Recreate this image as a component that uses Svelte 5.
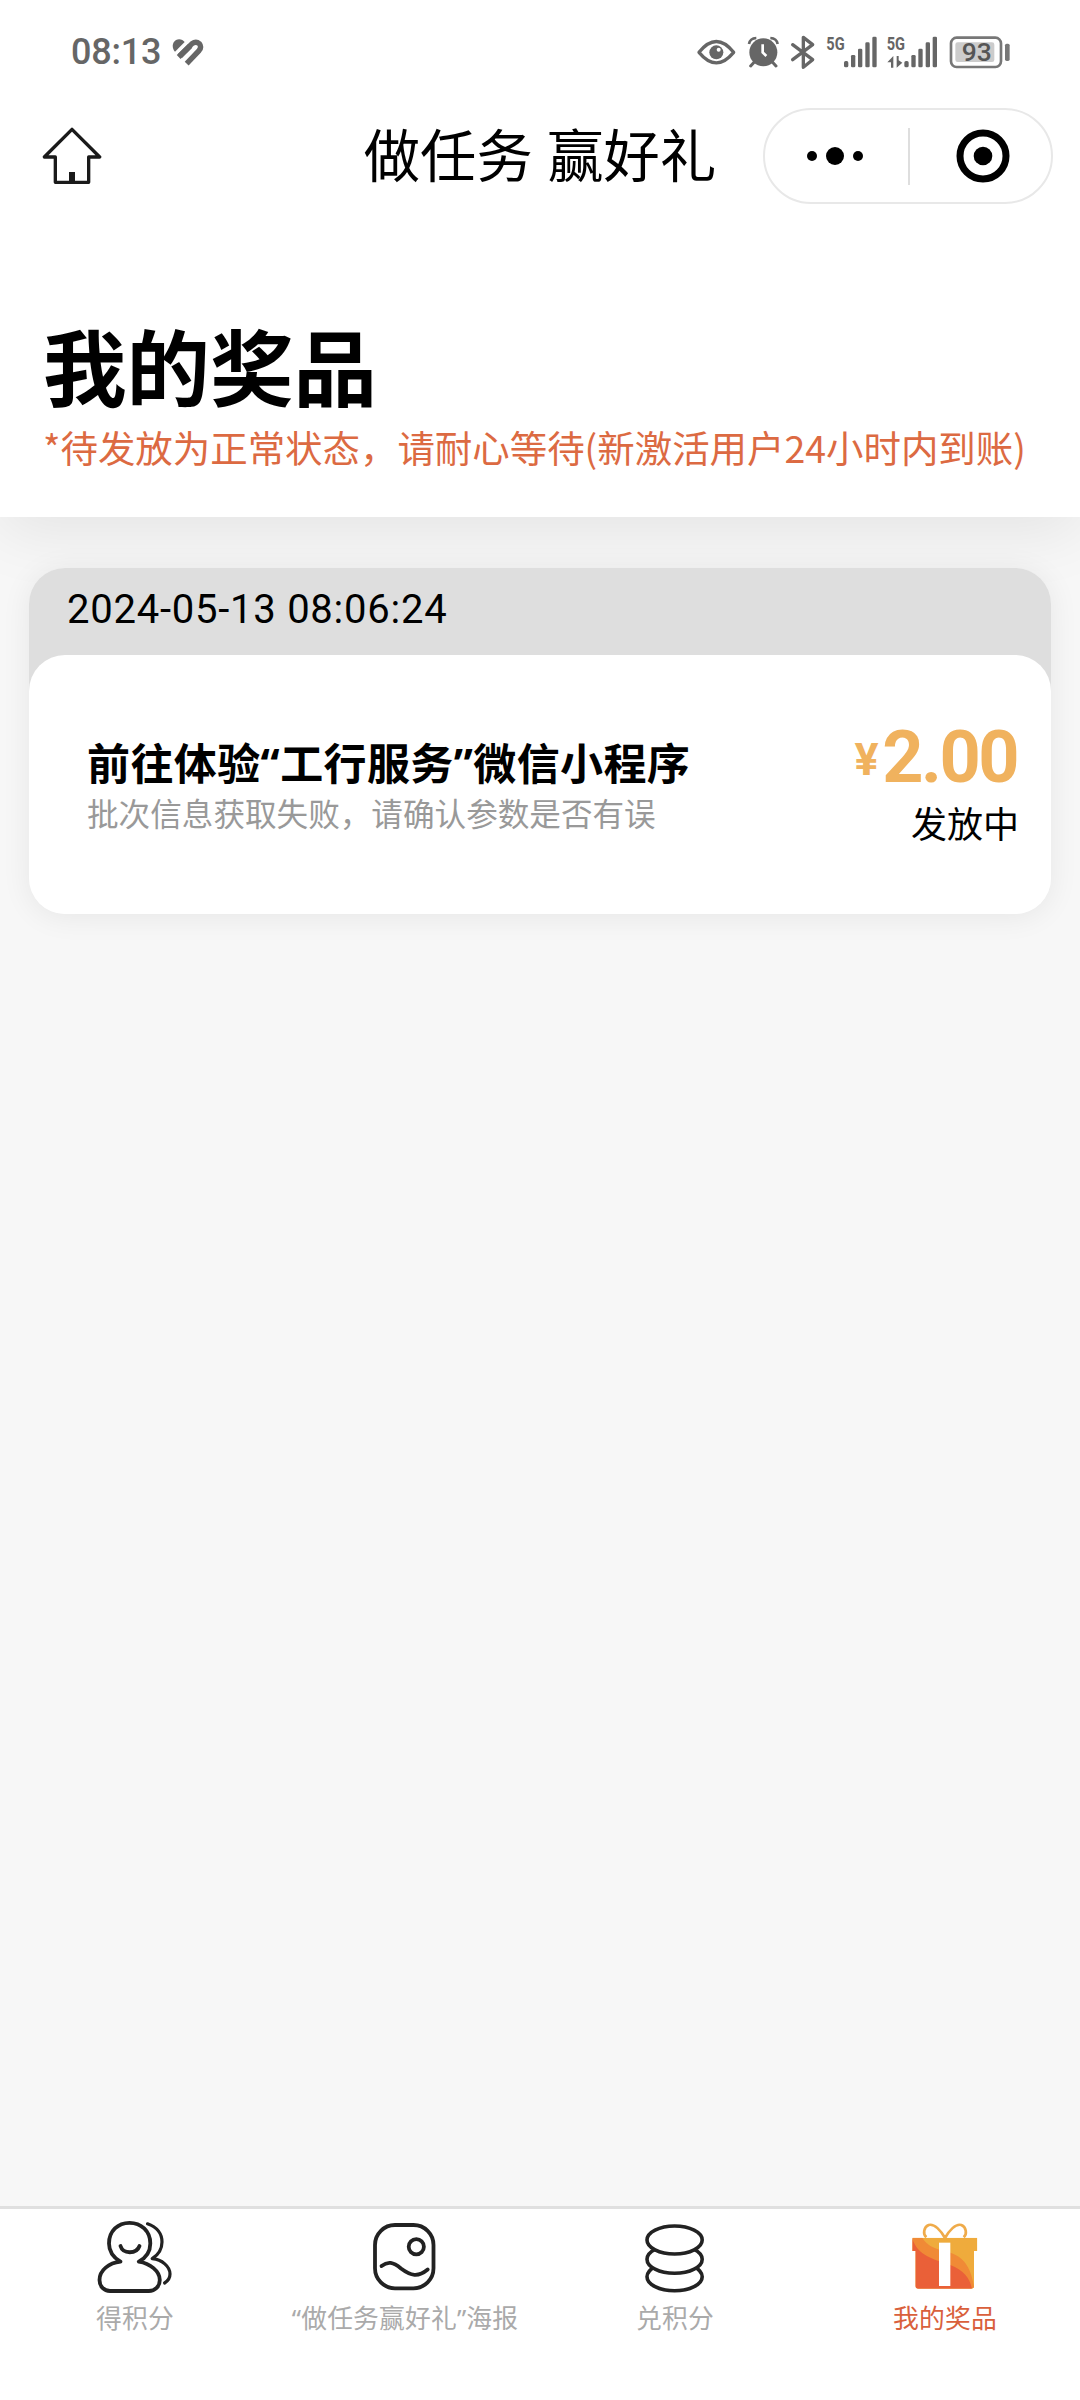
<script>
  const prizes = [
    {
      time: '2024-05-13 08:06:24',
      title: '前往体验“工行服务”微信小程序',
      note: '批次信息获取失败，请确认参数是否有误',
      amount: '2.00',
      status: '发放中'
    }
  ];
  const tabs = [
    { id: 'earn', label: '得积分' },
    { id: 'poster', label: '“做任务赢好礼”海报' },
    { id: 'redeem', label: '兑积分' },
    { id: 'prizes', label: '我的奖品' }
  ];
  let active = $state('prizes');
</script>

<div class="screen">
  <div class="statusbar">
    <span class="clock">08:13</span>
    <svg class="health" width="32" height="28" viewBox="516 113 96 84">
      <g fill="none" stroke="#666" stroke-linecap="butt">
        <path d="M536 170 L576 130 Q588 121 598 130 Q606 140 597 151 L560 190" stroke-width="16" />
        <path d="M540 167 L571 136" stroke-width="17" />
      </g>
      <path d="M525 154 C515 143 516 126 528 119 C538 114 549 118 554 125 Z" fill="#666" />
    </svg>
    <div class="indicators">
      <svg width="48.33" height="45" viewBox="40 30 145 135">
        <path d="M58 97 Q110 32 162 97 Q110 160 58 97Z" fill="none" stroke="#666" stroke-width="10" stroke-linejoin="round" />
        <circle cx="110" cy="97" r="21" fill="#666" />
        <circle cx="117" cy="89" r="6" fill="#fff" />
      </svg>
      <svg width="43.33" height="45" viewBox="185 30 130 135">
        <circle cx="249" cy="97" r="42" fill="#666" />
        <path d="M206 72 Q209 55 228 54 M292 72 Q289 55 270 54" fill="none" stroke="#666" stroke-width="8" />
        <path d="M222 126 L211 138 M276 126 L287 138" stroke="#666" stroke-width="9" stroke-linecap="round" />
        <path d="M247 73 V97 L258 108" fill="none" stroke="#fff" stroke-width="8" />
      </svg>
      <svg width="36.67" height="45" viewBox="315 30 110 135">
        <path d="M338 74 L398 119 L370 142 V52 L398 74 L338 119" fill="none" stroke="#666" stroke-width="10" stroke-linejoin="round" stroke-linecap="round" />
      </svg>
      <svg width="60.67" height="45" viewBox="425 30 182 135">
        <text class="net" x="438" y="90" textLength="55" lengthAdjust="spacingAndGlyphs">5G</text>
        <g fill="#666">
          <rect x="491" y="123" width="13" height="19" rx="5" />
          <rect x="512" y="105" width="13" height="37" rx="4" />
          <rect x="533" y="86" width="13" height="56" rx="4" />
          <rect x="555" y="67" width="13" height="75" rx="4" />
          <rect x="576" y="50" width="13" height="92" rx="4" />
        </g>
      </svg>
      <svg width="61" height="45" viewBox="607 30 183 135">
        <text class="net" x="621" y="90" textLength="55" lengthAdjust="spacingAndGlyphs">5G</text>
        <g fill="#666">
          <path d="M641 108 V143 H634 V127 H623Z" />
          <path d="M651 108 H657 V121 L668 128 L651 143Z" />
          <rect x="674" y="123" width="13" height="19" rx="5" />
          <rect x="695" y="105" width="13" height="37" rx="4" />
          <rect x="716" y="86" width="13" height="56" rx="4" />
          <rect x="738" y="67" width="13" height="75" rx="4" />
          <rect x="759" y="50" width="13" height="92" rx="4" />
        </g>
      </svg>
      <svg width="73.33" height="45" viewBox="790 30 220 135">
        <rect x="814" y="53" width="150" height="88" rx="17" fill="none" stroke="#777" stroke-width="8" />
        <rect x="827" y="67" width="117" height="59" rx="7" fill="#ccc" />
        <rect x="976" y="71" width="14" height="52" rx="5" fill="#777" />
        <text class="charge" x="846" y="123" textLength="90" lengthAdjust="spacingAndGlyphs">93</text>
      </svg>
    </div>
  </div>

  <header class="navbar">
    <div class="nav-side">
      <svg class="home" width="60" height="60" viewBox="126 378 180 180">
        <path d="M216 388 L299 471 H266 V547 H166 V471 H133 Z" fill="none" stroke="#1a1a1a" stroke-width="10" stroke-linejoin="round" />
        <rect x="207" y="516" width="18" height="32" fill="#1a1a1a" />
      </svg>
    </div>
    <h1>做任务 赢好礼</h1>
    <div class="nav-side end">
      <div class="capsule">
        <svg width="60" height="60" viewBox="-30 -30 60 60">
          <circle cx="-23" r="5" /><circle r="9" /><circle cx="23" r="5" />
        </svg>
        <span class="divider"></span>
        <svg width="60" height="60" viewBox="-30 -30 60 60">
          <circle r="23" fill="none" stroke="#000" stroke-width="7" /><circle r="9.3" />
        </svg>
      </div>
    </div>
  </header>

  <section class="intro">
    <h2>我的奖品</h2>
    <p>*待发放为正常状态，请耐心等待(新激活用户24小时内到账)</p>
  </section>

  <main>
    {#each prizes as prize}
      <article class="card">
        <div class="card-time">{prize.time}</div>
        <div class="card-body">
          <div class="info">
            <h3>{prize.title}</h3>
            <p>{prize.note}</p>
          </div>
          <div class="result">
            <div class="price"><span class="yen">¥</span><span>{prize.amount}</span></div>
            <div class="state">{prize.status}</div>
          </div>
        </div>
      </article>
    {/each}
  </main>

  <nav class="tabbar">
    {#each tabs as tab}
      <button class:active={active === tab.id} onclick={() => (active = tab.id)}>
        {#if tab.id === 'earn'}
          <svg width="80" height="80" viewBox="95 2217 80 80">
            <g transform="translate(95 2218)" fill="none" stroke="#222" stroke-width="3.8" stroke-linecap="round" stroke-linejoin="round">
              <path d="M25.5 43.7 C17.5 39 14 32 14 25.5 C14 13 23 4.8 34.5 4.8 C46 4.8 55.3 13 55.3 25.5 C55.3 33 51.5 39.5 43.8 43.7 C55 45.5 64.8 53 64.8 62 C64.8 68.5 60 73 53.8 73 H15 C9 73 4.5 68.5 4.5 62 C4.5 52 14 45 25.5 43.7Z" />
              <path d="M25.5 28 C28 36.3 41.5 36.3 44.5 28" />
              <path d="M52.5 5.8 C62 9 67 16 67 24 C67 31 63 37 57.2 40.7 C67 41.5 75 48.5 75 56 C75 60 73 63 69.6 65" stroke-width="3.2" />
            </g>
          </svg>
        {:else if tab.id === 'poster'}
          <svg width="80" height="80" viewBox="365 2217 80 80">
            <g fill="none" stroke="#222" stroke-width="3.8" stroke-linecap="round">
              <rect x="375" y="2225" width="58.5" height="63.3" rx="20" />
              <circle cx="416.3" cy="2246.7" r="7.6" />
              <path d="M381.5 2266 C388 2261 393 2262 401 2268.5 C411 2276 418 2277.500 427.700 2269.500" />
            </g>
          </svg>
        {:else if tab.id === 'redeem'}
          <svg width="80" height="80" viewBox="635 2217 80 80">
            <g fill="#fff" stroke="#222" stroke-width="3.6">
              <ellipse cx="674.6" cy="2276.7" rx="27.6" ry="14" />
              <ellipse cx="674.6" cy="2259.3" rx="27.6" ry="14" />
              <ellipse cx="674.6" cy="2240" rx="27.6" ry="14" />
            </g>
          </svg>
        {:else}
          <svg width="80" height="80" viewBox="76 21 240 240">
            <defs>
              <clipPath id="box"><path d="M98 83 H293 V123 H283 V228 Q283 236 275 236 H116 Q108 236 108 228 V123 H98Z" /></clipPath>
            </defs>
            <g clip-path="url(#box)">
              <rect x="95" y="80" width="200" height="160" fill="#efab3c" />
              <path d="M126 80 C142 112 175 118 212 128 C258 143 276 180 284 236 H90 V80Z" fill="#f08a36" />
              <path d="M98 86 C115 138 160 146 212 165 C252 180 272 206 277 238 H90 V86Z" fill="#ea6038" />
            </g>
            <rect x="178" y="98" width="34" height="130" fill="#fff" />
            <path d="M196 84 C184 62 164 40 147 45 C132 51 129 72 140 82 M196 84 C208 62 228 40 245 45 C260 51 263 72 252 82" fill="none" stroke="#efab4a" stroke-width="8" />
          </svg>
        {/if}
        <span>{tab.label}</span>
      </button>
    {/each}
  </nav>
</div>

<style>
  :global(body) { margin: 0; }
  .screen {
    width: 1080px;
    height: 2400px;
    display: flex;
    flex-direction: column;
    background: #f7f7f7;
    color: #000;
    font-family: 'Noto Sans CJK SC', sans-serif;
    overflow: hidden;
  }
  h1, h2, h3, p { margin: 0; white-space: nowrap; }
  svg { display: block; flex: none; }

  .statusbar {
    height: 104px;
    box-sizing: border-box;
    flex: none;
    display: flex;
    align-items: center;
    padding: 0 63.3px 0 71px;
    background: #fff;
    position: relative;
    z-index: 1;
  }
  .clock {
    width: 101px;
    font: 500 36px/50px Roboto, sans-serif;
    letter-spacing: -0.2px;
    color: #666;
  }
  .indicators { display: flex; margin-left: auto; }
  .net { font: 700 53px Roboto, sans-serif; fill: #666; }
  .charge { font: 500 77px Roboto, sans-serif; fill: #555; }

  .navbar {
    height: 104px;
    flex: none;
    display: grid;
    grid-template-columns: 1fr auto 1fr;
    align-items: center;
    background: #fff;
    position: relative;
    z-index: 1;
  }
  .nav-side { display: flex; padding-left: 42px; }
  .nav-side.end { justify-content: flex-end; padding: 0 27px 0 0; }
  h1 {
    height: 86px;
    font-size: 56.300px;
    font-weight: 400;
    line-height: 80px;
    word-spacing: 2px;
  }
  .capsule {
    width: 290px;
    height: 96px;
    box-sizing: border-box;
    padding: 0 38px 0 40px;
    border: 2px solid #e8e8e8;
    border-radius: 48px;
    display: flex;
    align-items: center;
    justify-content: space-between;
  }
  .divider { width: 2px; height: 57px; background: #dedede; }

  .intro {
    height: 309px;
    box-sizing: border-box;
    flex: none;
    padding: 106px 43px 0;
    background: #fff;
    box-shadow: 0 15px 60px rgba(0, 0, 0, 0.08);
  }
  h2 { font-size: 83.500px; font-weight: 700; line-height: 100px; }
  .intro p { margin-top: 5px; font-size: 37.450px; line-height: 56px; color: #dc6a42; }

  main { flex: 1; padding: 51px 29px 0; }
  .card { border-radius: 36px; box-shadow: 0 3px 30px rgba(0, 0, 0, 0.07); }
  .card-time {
    height: 123px;
    box-sizing: border-box;
    padding: 17px 38px 0;
    border-radius: 36px 36px 0 0;
    background: #dedede;
    font: 400 40px/50px Roboto, sans-serif;
    letter-spacing: 0.75px;
  }
  .card-body {
    height: 259px;
    box-sizing: border-box;
    margin-top: -36px;
    padding: 65px 32px 0 58px;
    border-radius: 36px;
    background: #fff;
    display: flex;
    justify-content: space-between;
  }
  .info { padding-top: 14px; }
  h3 {
    height: 56px;
    font: 700 43px/60px 'Noto Sans', 'Noto Sans CJK SC', sans-serif;
    letter-spacing: 0.4px;
  }
  .info p { font-size: 31.600px; line-height: 44px; color: #999; }
  .result { display: flex; flex-direction: column; align-items: flex-end; }
  .price {
    height: 76px;
    display: flex;
    align-items: baseline;
    margin-right: 2px;
    font: 700 72px/76px Roboto, sans-serif;
    letter-spacing: -2.500px;
    color: #f0b25e;
  }
  .yen { margin-right: 6px; font-size: 45px; position: relative; top: -7px; }
  .state { font-size: 36px; line-height: 52px; }

  .tabbar {
    height: 194px;
    box-sizing: border-box;
    flex: none;
    display: grid;
    grid-template-columns: repeat(4, 1fr);
    border-top: 3px solid #e0e0e0;
    background: #fff;
  }
  button {
    display: flex;
    flex-direction: column;
    align-items: center;
    justify-content: flex-start;
    padding: 8px 0 0;
    border: 0;
    background: none;
    color: #aaa;
    font: 400 25.800px/36px 'Noto Sans', 'Noto Sans CJK SC', sans-serif;
    letter-spacing: 0.150px;
    white-space: nowrap;
  }
  button span { height: 36px; margin-top: 3px; }
  button.active { color: #d9603c; }
</style>
